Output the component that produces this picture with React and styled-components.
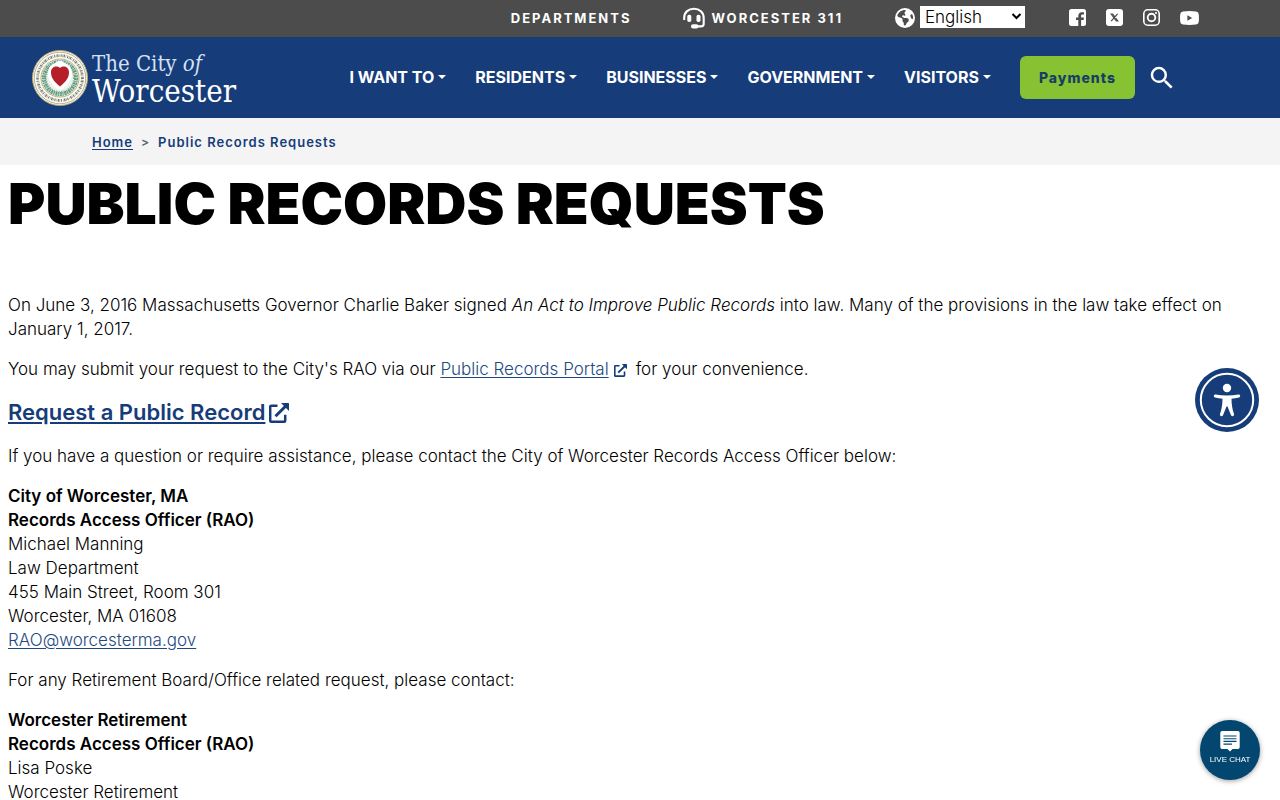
import React from 'react';
import styled, { createGlobalStyle } from 'styled-components';
import { FaEarthAmericas } from 'react-icons/fa6';
import { MdSearch } from 'react-icons/md';

const navy = '#173c7a';

const GlobalStyle = createGlobalStyle`
  *, *::before, *::after { box-sizing: border-box; }
  body { margin: 0; background: #fff; color: #000; font-family: Inter, "Open Sans", sans-serif; font-size: 17px; font-weight: 300; line-height: 24px; }
  strong { font-weight: 600; }
  svg { display: block; flex: none; }
`;

const TopBar = styled.div`
  display: flex;
  align-items: center;
  justify-content: flex-end;
  height: 37px;
  padding: 0 81px 2px 16px;
  background: #4c4c4c;
  color: #fff;
`;

const TopLink = styled.a`
  display: flex;
  align-items: center;
  gap: 6px;
  margin-right: 52px;
  color: #fff;
  font-size: 13px;
  font-weight: 700;
  line-height: 16px;
  letter-spacing: 2px;
  text-decoration: none;
`;

const Language = styled.label`
  position: relative;
  display: flex;
  align-items: center;
  gap: 5px;
  margin-right: 44px;
`;

const LanguageSelect = styled.select`
  appearance: none;
  width: 105px;
  height: 22px;
  margin: 0 0 2px;
  padding: 0 20px 0 4px;
  border: 1px solid #fff;
  border-radius: 0;
  background: #fff;
  color: #000;
  font: 300 17px/20px Inter, sans-serif;
`;

const Chevron = styled.svg`
  position: absolute;
  top: 6px;
  right: 3px;
  pointer-events: none;
`;

const Social = styled.div`
  display: flex;
  align-items: center;
  gap: 20px;
`;

const SocialLink = styled.a`
  color: #fff;
`;

const Header = styled.header`
  display: flex;
  align-items: center;
  justify-content: space-between;
  height: 81px;
  padding: 0 103px 0 32px;
  background: ${navy};
`;

const Logo = styled.a`
  display: flex;
  align-items: center;
  gap: 4px;
  color: #fff;
  font-family: "DejaVu Serif Condensed", "DejaVu Serif", serif;
  font-weight: 400;
  text-decoration: none;
`;

const LogoText = styled.span`
  display: flex;
  flex-direction: column;
`;

const LogoSmall = styled.span`
  color: #d5e1f5;
  font-size: 22px;
  line-height: 26px;
`;

const LogoLarge = styled.span`
  font-size: 31px;
  line-height: 28px;
`;

const Nav = styled.nav`
  display: flex;
  align-items: center;
  gap: 29px;
`;

const MenuButton = styled.button`
  display: flex;
  align-items: center;
  gap: 4px;
  padding: 0 0 2px;
  border: 0;
  background: none;
  color: #fff;
  font: 700 16px/20px Inter, sans-serif;
  white-space: nowrap;
  cursor: pointer;

  &::after {
    content: "";
    border: 4px solid transparent;
    border-top-color: #fff;
    border-bottom: 0;
  }
`;

const Actions = styled.div`
  display: flex;
  align-items: center;
  gap: 12px;
`;

const Payments = styled.a`
  padding: 12px 19px 11px;
  border-radius: 6px;
  background: #86c232;
  color: #173f63;
  font-size: 14px;
  font-weight: 800;
  line-height: 20px;
  letter-spacing: 1px;
  text-decoration: none;
`;

const SearchButton = styled.button`
  padding: 0;
  border: 0;
  background: none;
  color: #fff;
  cursor: pointer;
`;

const Breadcrumb = styled.nav`
  display: flex;
  align-items: center;
  gap: 8px;
  height: 47px;
  padding: 0 92px;
  background: #f4f4f4;
  color: ${navy};
  font-size: 13px;
  font-weight: 600;
  letter-spacing: 1px;

  a { color: inherit; text-underline-offset: 2px; }
`;

const Separator = styled.span`
  color: #5c6673;
  font-size: 12px;
`;

const Main = styled.main`
  padding: 8px 8px 24px;
`;

const Title = styled.h1`
  margin: 0 0 58px;
  font-size: 57px;
  font-weight: 900;
  line-height: 62px;
`;

const Paragraph = styled.p`
  margin: 0 0 16px;
`;

const TextLink = styled.a`
  color: #1d4a80;
  text-underline-offset: 2px;
`;

const RequestHeading = styled.h2`
  display: flex;
  align-items: center;
  gap: 4px;
  margin: 0 0 16px;
  color: ${navy};
  font-size: 22px;
  font-weight: 600;
  line-height: 31px;

  a { color: inherit; text-underline-offset: 2px; }
`;

const InlineIcon = styled.span`
  display: inline-block;
  margin: 0 9px 0 5px;
  color: ${navy};
  vertical-align: -2px;
`;

const Accessibility = styled.button`
  position: fixed;
  top: 368px;
  right: 21px;
  padding: 0;
  border: 0;
  border-radius: 50%;
  background: none;
  cursor: pointer;
`;

const Chat = styled.button`
  position: fixed;
  right: 20px;
  bottom: 20px;
  display: flex;
  flex-direction: column;
  align-items: center;
  gap: 3px;
  width: 60px;
  height: 60px;
  padding: 11px 0 0;
  border: 0;
  border-radius: 50%;
  background: #03466f;
  box-shadow: 0 1px 5px rgba(0, 0, 0, 0.4);
  color: #fff;
  font: 500 8px/10px "Liberation Sans", sans-serif;
  cursor: pointer;
`;

const Headset = () => (
  <svg width="22" height="22" viewBox="0 0 22 22" aria-hidden="true" fill="none" stroke="#fff" strokeWidth="2.1">
    <path d="M1.200 13V11C1.200 5 5.500 1.700 11 1.700S20.700 5.200 20.700 11v5.700q0 2.700-2.700 2.700H13" />
    <rect x="4.300" y="7.800" width="4" height="7.200" rx="1.700" fill="#fff" stroke="none" />
    <rect x="13.500" y="7.800" width="4" height="7.200" rx="1.700" fill="#fff" stroke="none" />
    <rect x="8" y="17.300" width="7.500" height="4.200" rx="2.100" fill="#fff" stroke="none" />
  </svg>
);

const Facebook = () => (
  <svg width="17" height="17" viewBox="0 0 17 17" aria-hidden="true">
    <rect width="17" height="17" rx="2.500" fill="#fff" />
    <path d="M9.300 17v-6H7V8.500h2.300V7c0-2.700 1.600-3.800 3.400-3.800H15v2.300h-1.600c-.9 0-1.300.5-1.300 1.400v1.600H15l-.4 2.500h-2.500v6Z" fill="#4c4c4c" />
  </svg>
);

const XLogo = () => (
  <svg width="17" height="17" viewBox="0 0 17 17" aria-hidden="true">
    <rect width="17" height="17" rx="3" fill="#fff" />
    <path d="M5.200 5h1.500l5.100 7h-1.500ZM11.600 4.800 5.200 12.200" fill="none" stroke="#4c4c4c" strokeWidth="1.200" />
  </svg>
);

const Instagram = () => (
  <svg width="17" height="17" viewBox="0 0 17 17" aria-hidden="true" fill="none" stroke="#fff">
    <rect x=".8" y=".8" width="15.400" height="15.400" rx="4" strokeWidth="1.600" />
    <circle cx="8.500" cy="8.500" r="3.800" strokeWidth="1.900" />
    <circle cx="13" cy="4" r="1.100" fill="#fff" stroke="none" />
  </svg>
);

const Youtube = () => (
  <svg width="19" height="14" viewBox="0 0 19 14" aria-hidden="true">
    <path d="M3 .4Q9.500-.4 16 .4 18.400.7 18.700 3q.5 4 0 8-.3 2.300-2.700 2.600-6.500.8-13 0Q.6 13.300.3 11-.2 7 .3 3 .6.7 3 .4Z" fill="#fff" />
    <path d="m7.400 4.300 4.800 2.700-4.800 2.700Z" fill="#4c4c4c" />
  </svg>
);

const External = ({ size }) => (
  <svg width={size} height={size} viewBox="0 0 20 20" aria-hidden="true" fill="none" stroke={navy} strokeWidth="2.500">
    <path d="M8.500 2.700H2.200q-1 0-1 1v14q0 1 1 1h13q1 0 1-1v-6" />
    <path d="M6.500 13.300 16.800 3" strokeWidth="3" />
    <path d="M12 0h7.400q.6 0 .6.6V8Z" fill={navy} stroke="none" />
  </svg>
);

const Seal = () => (
  <svg width="56" height="56" viewBox="0 0 56 56" aria-hidden="true">
    <circle cx="28" cy="28" r="27.500" fill="#fbfaf3" stroke="#b6a46c" />
    <circle cx="28" cy="28" r="25.800" fill="none" stroke="#8b8558" strokeWidth=".6" />
    <circle cx="28" cy="28" r="22.400" fill="none" stroke="#77766c" strokeWidth="2.800" strokeDasharray="1 .9 .5 .6 1.300 .8 .4 1.100" />
    <circle cx="28" cy="28" r="19" fill="#edf3ea" stroke="#aaa06e" strokeWidth=".8" />
    <circle cx="28" cy="28" r="16" fill="none" stroke="#5f997e" strokeWidth="4" strokeDasharray="2.200 .6 1.300 .5" />
    <circle cx="28" cy="28" r="16.500" fill="none" stroke="#c5dccb" strokeWidth="1" strokeDasharray="1 1.700" />
    <circle cx="28" cy="28" r="13.600" fill="none" stroke="#7eae92" strokeWidth="1.200" strokeDasharray="1 1.400" />
    <path d="M28 10.500c3 0 4 3 8 4 5 4 5.500 12 1 17.500-2 3.500-5 7-9 8-4-1-7-4.500-9-8-4.500-5.500-4-13.500 1-17.500 4-1 5-4 8-4Z" fill="#fff" />
    <path d="M28 18c2.500-2.800 9-2 9 4.500C37 29 32 33 28 36.500 24 33 19 29 19 22.500c0-6.500 6.500-7.300 9-4.500Z" fill="#b41f2a" />
  </svg>
);

const Person = () => (
  <svg width="64" height="64" viewBox="0 0 64 64" aria-hidden="true">
    <circle cx="32" cy="32" r="32" fill={navy} />
    <circle cx="32" cy="32" r="26.200" fill="none" stroke="#fff" strokeWidth="2" />
    <circle cx="32" cy="20" r="4.200" fill="#fff" />
    <path d="M20.500 26.500q11.500 2 23 0c2-.2 2.300 2.500.5 3-2.500.6-5 .9-7.500 1.200 0 6 1 11 2.500 15.300.7 2-2 3-3 1.200l-3.500-8.700h-1L28 47.200c-1 1.800-3.700.8-3-1.200 1.500-4.300 2.500-9.300 2.500-15.300-2.500-.3-5-.6-7.500-1.200-1.800-.5-1.500-3.200.5-3Z" fill="#fff" />
  </svg>
);

const ChatIcon = () => (
  <svg width="20" height="21" viewBox="0 0 20 21" aria-hidden="true">
    <path d="M2 0h16q1.700 0 1.700 1.700v14.600q0 1.700-1.700 1.700h-5.500L10 20.500 7.500 18H2Q.3 18 .3 16.300V1.700Q.3 0 2 0Z" fill="#fff" />
    <path d="M3.500 5h13M3.500 7.700h13M3.500 10.400h13M3.500 13.100h8.500" stroke="#03466f" strokeWidth="1.100" />
  </svg>
);

const menus = ['I WANT TO', 'RESIDENTS', 'BUSINESSES', 'GOVERNMENT', 'VISITORS'];
const socials = [['Facebook', Facebook], ['X', XLogo], ['Instagram', Instagram], ['YouTube', Youtube]];

export default function App() {
  return (
    <>
      <GlobalStyle />
      <TopBar>
        <TopLink href="#departments">DEPARTMENTS</TopLink>
        <TopLink href="#311"><Headset />WORCESTER 311</TopLink>
        <Language>
          <FaEarthAmericas size={20} aria-hidden="true" />
          <LanguageSelect aria-label="Language" defaultValue="English">
            <option>English</option>
          </LanguageSelect>
          <Chevron width="11" height="9" viewBox="0 0 11 9" aria-hidden="true">
            <path d="m1.500 2 4 4 4-4" fill="none" stroke="#000" strokeWidth="2" />
          </Chevron>
        </Language>
        <Social>
          {socials.map(([name, Icon]) => (
            <SocialLink key={name} href={`#${name}`} aria-label={name}><Icon /></SocialLink>
          ))}
        </Social>
      </TopBar>
      <Header>
        <Logo href="#home">
          <Seal />
          <LogoText>
            <LogoSmall>The City <em>of</em></LogoSmall>
            <LogoLarge>Worcester</LogoLarge>
          </LogoText>
        </Logo>
        <Nav aria-label="Main">
          {menus.map((label) => <MenuButton key={label}>{label}</MenuButton>)}
          <Actions>
            <Payments href="#payments">Payments</Payments>
            <SearchButton aria-label="Search"><MdSearch size={30} /></SearchButton>
          </Actions>
        </Nav>
      </Header>
      <Breadcrumb aria-label="Breadcrumb">
        <a href="#home">Home</a>
        <Separator>&gt;</Separator>
        <span>Public Records Requests</span>
      </Breadcrumb>
      <Main>
        <Title>PUBLIC RECORDS REQUESTS</Title>
        <Paragraph>
          On June 3, 2016 Massachusetts Governor Charlie Baker signed <em>An Act to Improve Public Records</em> into law. Many of the provisions in the law take effect on January 1, 2017.
        </Paragraph>
        <Paragraph>
          You may submit your request to the City's RAO via our <TextLink href="#portal">Public Records Portal</TextLink>
          <InlineIcon><External size={13} /></InlineIcon>
          for your convenience.
        </Paragraph>
        <RequestHeading><a href="#request">Request a Public Record</a><External size={20} /></RequestHeading>
        <Paragraph>If you have a question or require assistance, please contact the City of Worcester Records Access Officer below:</Paragraph>
        <Paragraph>
          <strong>City of Worcester, MA<br />Records Access Officer (RAO)</strong><br />
          Michael Manning<br />
          Law Department<br />
          455 Main Street, Room 301<br />
          Worcester, MA 01608<br />
          <TextLink href="mailto:RAO@worcesterma.gov">RAO@worcesterma.gov</TextLink>
        </Paragraph>
        <Paragraph>For any Retirement Board/Office related request, please contact:</Paragraph>
        <Paragraph>
          <strong>Worcester Retirement<br />Records Access Officer (RAO)</strong><br />
          Lisa Poske<br />
          Worcester Retirement
        </Paragraph>
      </Main>
      <Accessibility aria-label="Accessibility options"><Person /></Accessibility>
      <Chat><ChatIcon />LIVE CHAT</Chat>
    </>
  );
}
